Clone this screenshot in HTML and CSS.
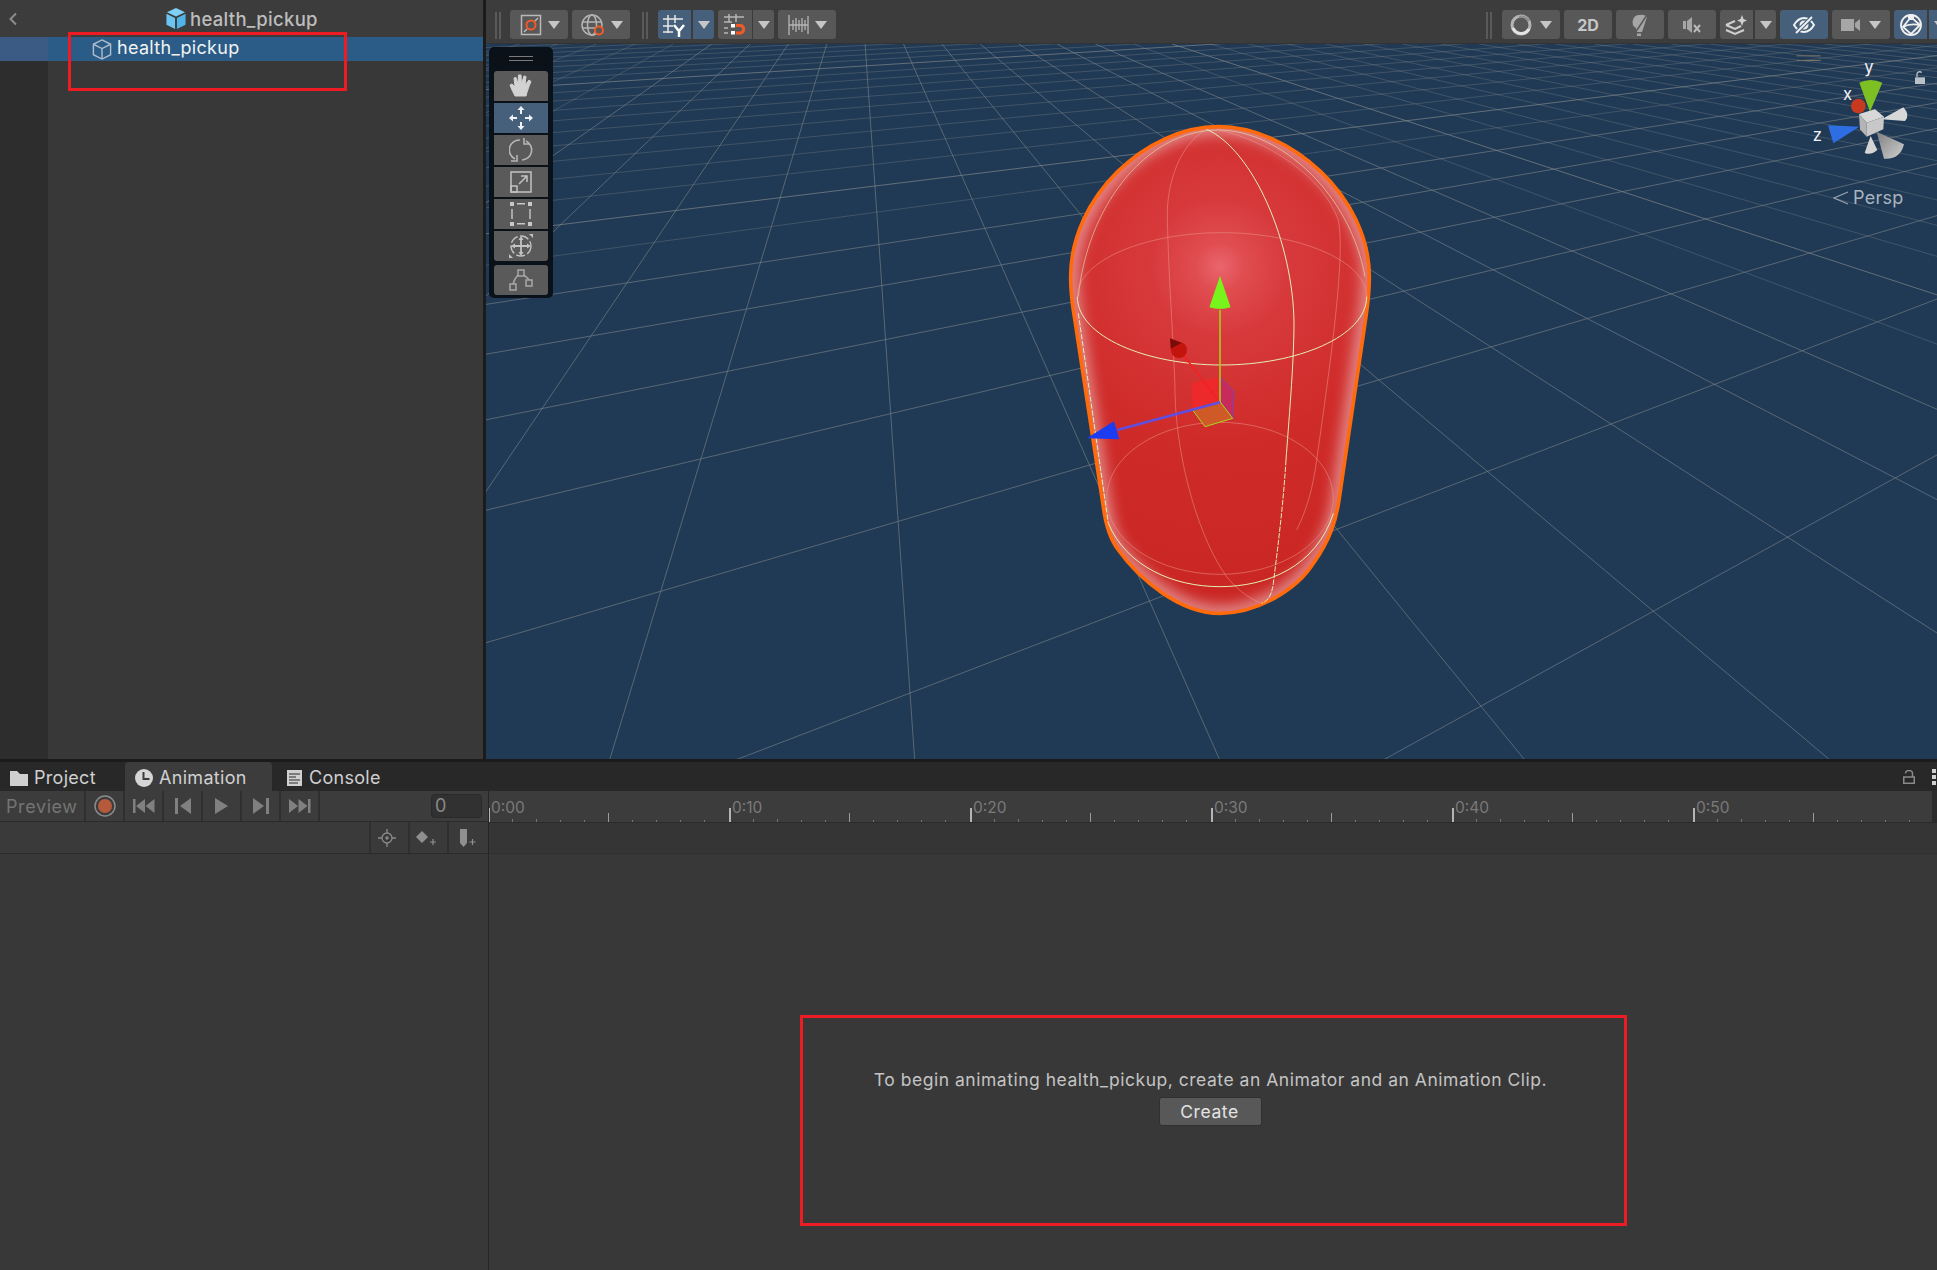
FILE: index.html
```html
<!DOCTYPE html>
<html lang="en">
<head>
<meta charset="utf-8">
<title>health_pickup</title>
<link rel="stylesheet" href="styles.css">
</head>
<body>
<div class="app">
  <div class="top">
    <section class="hierarchy">
      <header class="crumb">
        <svg class="chev" width="10" height="14" viewBox="0 0 10 14"><path d="M8 1.500 2.500 7 8 12.500" fill="none" stroke="#8c8c8c" stroke-width="2"/></svg>
        <span class="crumb-title">
          <svg width="20" height="21" viewBox="0 0 20 22"><path d="M10 0 19.500 4.500 10 9 .5 4.500Z" fill="#7fd0f7"/><path d="M0 6 9 10.500V22L0 17.500Z" fill="#6cc4f0"/><path d="M20 6 11 10.500V22L20 17.500Z" fill="#4fb3e8"/></svg>
          health_pickup
        </span>
      </header>
      <div class="tree">
        <div class="gutter"></div>
        <div class="tree-main">
          <div class="row-sel">
            <svg width="20" height="21" viewBox="0 0 20 22" fill="none" stroke="#aebccb" stroke-width="1.500"><path d="M10 1 19 5.500V16.500L10 21 1 16.500V5.500Z"/><path d="M1 5.500 10 10 19 5.500M10 10V21"/></svg>
            <span>health_pickup</span>
          </div>
        </div>
      </div>
    </section>
    <section class="scene">
      <div class="toolbar">
        <i class="grip"></i>
        <div class="tb w58 tight">
          <svg width="24" height="24" viewBox="0 0 24 24" fill="none"><rect x="2.500" y="2.500" width="19" height="19" stroke="#b9b9b9" stroke-width="1.500"/><path d="M5 19 8 16M16 8 19 5" stroke="#b9b9b9" stroke-width="1.500"/><circle cx="12" cy="12" r="4.500" stroke="#f05a28" stroke-width="2"/></svg>
          <i class="caret"></i>
        </div>
        <div class="tb w58 tight">
          <svg width="26" height="24" viewBox="0 0 26 24" fill="none" stroke="#b5b5b5" stroke-width="1.500"><circle cx="12" cy="12" r="10"/><ellipse cx="12" cy="12" rx="4.500" ry="10"/><path d="M2 9H22M2 15H22"/><circle cx="19" cy="17.500" r="4" fill="#585858" stroke="#f05a28" stroke-width="2"/></svg>
          <i class="caret"></i>
        </div>
        <i class="grip g2"></i>
        <div class="tb on w33">
          <svg width="26" height="24" viewBox="0 0 26 24" fill="none" stroke="#e8e8e8" stroke-width="1.500"><path d="M6 2V20M13 2V10M1 6H21M1 13H11M1 19H11"/><path d="M12 12 17 18 22 12M17 18V24" stroke="#fff" stroke-width="2.500"/></svg>
        </div>
        <div class="tb on w21"><i class="caret"></i></div>
        <div class="tb w34 g4">
          <svg width="26" height="24" viewBox="0 0 26 24" fill="none" stroke="#b5b5b5" stroke-width="1.500"><path d="M7 1V9M14 1V9M2 4H22M2 9H10M2 15H6M2 20H6" /><rect x="9" y="11" width="4" height="3.500" fill="#fff" stroke="none"/><rect x="9" y="18" width="4" height="3.500" fill="#fff" stroke="none"/><path d="M14 12.500H19A4 4 0 0 1 19 20H14" stroke="#f05a28" stroke-width="3"/></svg>
        </div>
        <div class="tb w21 g1"><i class="caret"></i></div>
        <div class="tb w58 tight">
          <svg width="22" height="22" viewBox="0 0 22 22" fill="none" stroke="#b5b5b5" stroke-width="1.300"><path d="M1 1V21M20 2V20M5 6V16M8 4V18M11 6V16M14 4V18M17 6V16M1 11H20"/></svg>
          <i class="caret"></i>
        </div>
        <i class="grip gr"></i>
        <div class="tb w58">
          <svg width="22" height="22" viewBox="0 0 22 22" fill="none"><circle cx="11" cy="11" r="9" stroke="#b4b4b4" stroke-width="3"/><path d="M3 14A9 9 0 0 0 19 15" stroke="#e4e4e4" stroke-width="3"/><path d="M9 3A9 9 0 0 1 19 7" stroke="#8e8e8e" stroke-width="2.500"/></svg>
          <i class="caret"></i>
        </div>
        <div class="tb w48 t2d">2D</div>
        <div class="tb w48">
          <svg width="20" height="24" viewBox="0 0 20 24"><path d="M10 2A7 7 0 0 0 6 15V19H12L17 4A7 7 0 0 0 10 2Z" fill="#a6a6a6"/><path d="M7 20.500H11V23H7Z" fill="#a6a6a6"/><path d="M5 20 17 2" stroke="#585858" stroke-width="1.500"/></svg>
        </div>
        <div class="tb w48">
          <svg width="20" height="18" viewBox="0 0 20 18"><path d="M1 5H4V13H1ZM5 5 10 1V17L5 13Z" fill="#a6a6a6"/><path d="M12 9 18 16M18 9 12 16" stroke="#b8b8b8" stroke-width="2"/></svg>
        </div>
        <div class="tb w33">
          <svg width="26" height="24" viewBox="0 0 26 24" fill="none" stroke="#cfcfcf" stroke-width="2"><path d="M2 12 11 16 17 13"/><path d="M2 17 11 21 20 17"/><path d="M2 12 11 8"/><path d="M18 2 19.500 6 23 7.500 19.500 9 18 13 16.500 9 13 7.500 16.500 6Z" fill="#cfcfcf" stroke="none"/></svg>
        </div>
        <div class="tb w21 g2px"><i class="caret"></i></div>
        <div class="tb on w48 g4">
          <svg width="24" height="20" viewBox="0 0 24 20" fill="none" stroke="#f0f0f0" stroke-width="2"><path d="M2 10C5 5 9 3 12 3S19 5 22 10C19 15 15 17 12 17S5 15 2 10Z"/><circle cx="12" cy="10" r="3.500" fill="#f0f0f0"/><path d="M4 18 20 2" stroke="#46607c" stroke-width="4"/><path d="M4 18 20 2"/></svg>
        </div>
        <div class="tb w58">
          <svg width="20" height="14" viewBox="0 0 20 14"><rect x="0" y="1" width="13" height="12" fill="#a6a6a6"/><path d="M14 5 19 1V13L14 9Z" fill="#a6a6a6"/></svg>
          <i class="caret"></i>
        </div>
        <div class="tb on w33">
          <svg width="24" height="24" viewBox="0 0 24 24" fill="none" stroke="#f0f0f0" stroke-width="1.800"><circle cx="12" cy="12" r="10"/><path d="M12 4 4 14 12 21 21 12ZM4 14C9 11 15 11 21 12"/><circle cx="12" cy="4" r="2.200" fill="#f0f0f0"/></svg>
        </div>
        <div class="tb on w21 g2px"><i class="caret"></i></div>
      </div>
      <div class="viewport">
        <svg class="world" width="1451" height="715" viewBox="486 44 1451 715">
          <defs>
            <radialGradient id="body" gradientUnits="userSpaceOnUse" cx="540" cy="470" r="1050">
              <stop offset="0" stop-color="#e9666d"/>
              <stop offset=".07" stop-color="#e04d51"/>
              <stop offset=".2" stop-color="#d7393b"/>
              <stop offset=".5" stop-color="#cf2b29"/>
              <stop offset="1" stop-color="#c92522"/>
            </radialGradient>
            <filter id="soft" x="-10%" y="-10%" width="120%" height="120%"><feGaussianBlur stdDeviation="20"/></filter>
            <path id="hull" d="M535 50C750 50 988 260 988 500C988 560 982 590 975 640L900 1150C890 1230 870 1290 820 1360C770 1440 650 1510 540 1510C420 1510 300 1410 235 1320C205 1280 195 1230 190 1190L100 600C94 560 92 530 92 500C92 260 320 50 535 50Z"/>
            <clipPath id="hullclip"><use href="#hull"/></clipPath>
            <linearGradient id="bigcone" x1="0" y1="0" x2="1" y2="1"><stop offset="0" stop-color="#7f7f7f"/><stop offset="1" stop-color="#d0d0d0"/></linearGradient>
          </defs>
          <g id="grid"></g>
          <g transform="translate(1040 110) scale(.33333)">
            <use href="#hull" fill="url(#body)"/>
            <g clip-path="url(#hullclip)"><use href="#hull" fill="none" stroke="#eec4c4" stroke-opacity=".68" stroke-width="44" filter="url(#soft)"/></g>
            <use href="#hull" fill="none" stroke="#ff6a0c" stroke-width="11"/>
            <g fill="none" stroke="#ea9a8e" stroke-width="2.500" stroke-opacity=".6">
              <path d="M112 560C112 450 320 368 545 368S980 450 980 560"/>
              <ellipse cx="540" cy="1165" rx="340" ry="228"/>
              <path d="M500 58C420 100 380 220 382 320C385 500 405 760 405 850C410 1060 480 1290 560 1400C600 1450 640 1470 665 1480"/>
              <path d="M535 60C680 90 850 200 895 330C915 430 880 700 830 1050C820 1130 800 1200 770 1260"/>
            </g>
            <g fill="none" stroke="#e1f0b4" stroke-width="3">
              <path d="M112 560C112 680 320 765 545 765S980 680 980 560"/>
              <path d="M205 1240C260 1370 400 1430 540 1430C680 1430 830 1370 880 1210"/>
              <path d="M115 560C140 300 310 60 535 60C720 60 930 250 975 500" stroke-opacity=".55"/>
              <path d="M500 58C640 120 760 400 762 640C762 760 745 950 738 1050"/>
              <path d="M738 1050C730 1180 715 1300 700 1420C695 1460 680 1475 665 1480" stroke-dasharray="16 4"/>
              <path d="M115 610 205 1240" stroke-dasharray="16 5"/>
            </g>
            <path d="M455 820 540 800V875L458 900Z" fill="#f5272b" fill-opacity=".75"/>
            <path d="M540 800 582 845 578 925 540 875Z" fill="#c82a5c" stroke="#5a50d8" stroke-width="2"/>
            <path d="M458 900 540 875 578 925 495 950Z" fill="#cf5a28" stroke="#a8d81c" stroke-width="3"/>
            <path d="M540 877V600" stroke="#a8c81e" stroke-width="5"/>
            <path d="M540 498 508 592Q540 602 572 592Z" fill="#78f41c"/>
            <path d="M535 870 420 722" stroke="#f22222" stroke-width="5"/>
            <circle cx="417" cy="720" r="24" fill="#c4140e"/>
            <path d="M390 685 392 716 425 698Z" fill="#7a0c08"/>
            <path d="M540 877 232 960" stroke="#5f4fe0" stroke-width="8"/>
            <path d="M140 985 222 934 238 988Z" fill="#1c3cf2"/>
          </g>
          <g transform="translate(1480 0) scale(.33333)">
            <rect x="950" y="166" width="72" height="3" fill="#7a7468"/>
            <rect x="950" y="180" width="72" height="3" fill="#7a7468"/>
            <path d="M1305 232h30v20h-30z" fill="#b8c0c8"/>
            <path d="M1311 232v-8a8 8 0 0 1 14 -6" fill="none" stroke="#b8c0c8" stroke-width="4"/>
            <circle cx="1135" cy="318" r="22" fill="#c83a20"/>
            <path d="M1170 335 1138 248Q1172 232 1207 248Z" fill="#7cc023"/>
            <path d="M1138 380 1044 376 1060 430Z" fill="#2e6de2"/>
            <path d="M1205 358 1270 322Q1292 345 1275 363Z" fill="#d8d8d8"/>
            <path d="M1172 408 1154 458Q1170 468 1192 450Z" fill="#d5d5d5"/>
            <path d="M1190 395 1272 433Q1260 480 1212 476Z" fill="url(#bigcone)"/>
            <path d="M1137 342 1185 328 1212 350 1160 368Z" fill="#d8d8d8"/>
            <path d="M1137 342 1160 368V410L1140 388Z" fill="#b4b4b4"/>
            <path d="M1160 368 1212 350 1210 388 1160 410Z" fill="#c8c8c8"/>
            <text class="axis" x="1167" y="220">y</text>
            <text class="axis" x="1103" y="300">x</text>
            <text class="axis" x="1012" y="423">z</text>
          </g>
        </svg>
        <div class="toolbox">
          <div class="handle"></div>
          <div class="tool">
            <svg width="24" height="26" viewBox="0 0 24 26"><path d="M6 23C4 19 2 15 1 12L3 11 6 14 5 5 7 4.500 9 11 9.500 2 12 2 12.500 11 15 3 17 3.500 16 12 20 7 22 8.500C20 13 18 19 17 23Z" fill="#d2d2d2" stroke="#d2d2d2" stroke-linejoin="round"/></svg>
          </div>
          <div class="tool on">
            <svg width="26" height="26" viewBox="0 0 26 26" fill="none" stroke="#eef2f6" stroke-width="2"><path d="M13 3V9M13 17V23M3 13H9M17 13H23"/><path d="M13 1 9.500 5H16.500ZM13 25 9.500 21H16.500ZM1 13 5 9.500V16.500ZM25 13 21 9.500V16.500Z" fill="#eef2f6" stroke="none"/></svg>
          </div>
          <div class="tool">
            <svg width="24" height="26" viewBox="0 0 24 26" fill="none" stroke="#b5b5b5" stroke-width="1.600"><path d="M11 3A10 10 0 0 0 6 22"/><path d="M13 23A10 10 0 0 0 17 4"/><path d="M2 24H8V18M15 1V7H21"/></svg>
          </div>
          <div class="tool">
            <svg width="22" height="22" viewBox="0 0 22 22" fill="none" stroke="#c2c2c2" stroke-width="1.500"><rect x="1" y="1" width="20" height="20"/><rect x="1" y="15" width="6" height="6"/><path d="M9 13 17 5M11 5H17V11"/></svg>
          </div>
          <div class="tool">
            <svg width="22" height="24" viewBox="0 0 22 24" fill="#c8c8c8"><rect x="0" y="0" width="4" height="4"/><rect x="18" y="0" width="4" height="4"/><rect x="0" y="20" width="4" height="4"/><rect x="18" y="20" width="4" height="4"/><path d="M7 1h8v1.400H7zM7 21h8v1.600H7zM1.300 7h1.400v10H1.300zM19.300 7h1.400v10h-1.400z"/></svg>
          </div>
          <div class="tool">
            <svg width="26" height="26" viewBox="0 0 26 26" fill="none" stroke="#c2c2c2" stroke-width="1.400"><circle cx="13" cy="13" r="10" stroke-dasharray="9 2.500"/><path d="M13 5V21M5 13H21" stroke-width="1.800"/><path d="M13 3 10.500 7H15.500ZM13 23 10.500 19H15.500ZM3 13 7 10.500V15.500ZM23 13 19 10.500V15.500Z" fill="#c2c2c2" stroke="none"/><path d="M21 1H25V5ZM1 25V21L5 25Z" fill="#c2c2c2" stroke="none"/></svg>
          </div>
          <div class="tool sep">
            <svg width="24" height="22" viewBox="0 0 24 22" fill="none" stroke="#a8a8a8" stroke-width="1.500"><rect x="1" y="15" width="6" height="6"/><rect x="17" y="11" width="6" height="6"/><rect x="9" y="1" width="6" height="6"/><path d="M4 15C5 11 7 8 9 6M15 6C17 8 19 9 20 11"/></svg>
          </div>
        </div>
        <div class="persp">
          <svg width="16" height="14" viewBox="0 0 16 14" fill="none" stroke="#9aa5b1" stroke-width="1.200"><path d="M15 1 1 7 15 13"/></svg>
          <span>Persp</span>
        </div>
      </div>
    </section>
  </div>
  <div class="bottom">
    <nav class="tabs">
      <div class="tab">
        <svg width="19" height="16" viewBox="0 0 19 16"><path d="M0 1H7L10 4H18V16H0Z" fill="#d0d0d0"/></svg>
        <span>Project</span>
      </div>
      <div class="tab active">
        <svg width="18" height="18" viewBox="0 0 18 18"><circle cx="9" cy="9" r="9" fill="#d6d6d6"/><path d="M8.500 3V10H14.500" fill="none" stroke="#3c3c3c" stroke-width="2"/></svg>
        <span>Animation</span>
      </div>
      <div class="tab last">
        <svg width="15" height="16" viewBox="0 0 15 16"><rect width="15" height="16" fill="#d0d0d0"/><path d="M2 4H13M2 7H9M2 10H13M2 13H11" stroke="#282828" stroke-width="1.200"/></svg>
        <span>Console</span>
      </div>
      <div class="tab-tools">
        <svg width="12" height="14" viewBox="0 0 12 14" fill="none" stroke="#8a8a8a" stroke-width="1.500"><rect x=".75" y="7" width="10.500" height="6.300"/><path d="M2.500 3.500A3.500 3 0 0 1 9.500 3.500V7"/></svg>
        <span class="dots"><i></i><i></i><i></i></span>
      </div>
    </nav>
    <div class="anim">
      <aside class="props">
        <div class="controls">
          <div class="cell preview">Preview</div>
          <div class="cell"><svg width="22" height="22" viewBox="0 0 22 22"><circle cx="11" cy="11" r="10" fill="none" stroke="#8a8a8a" stroke-width="1.500"/><circle cx="11" cy="11" r="7" fill="#b65a3c"/></svg></div>
          <div class="cell"><svg width="22" height="14" viewBox="0 0 22 14" fill="#808080"><path d="M0 0H2.500V14H0ZM12 0V14L3 7ZM21.500 0V14L12.500 7Z"/></svg></div>
          <div class="cell"><svg width="16" height="16" viewBox="0 0 16 16" fill="#808080"><path d="M0 0H3V16H0ZM16 0V16L5 8Z"/></svg></div>
          <div class="cell"><svg width="13" height="16" viewBox="0 0 13 16" fill="#808080"><path d="M0 0 13 8 0 16Z"/></svg></div>
          <div class="cell"><svg width="16" height="16" viewBox="0 0 16 16" fill="#808080"><path d="M16 0H13V16H16ZM0 0V16L11 8Z"/></svg></div>
          <div class="cell"><svg width="22" height="14" viewBox="0 0 22 14" fill="#808080"><path d="M21.500 0H19V14H21.500ZM9.500 0V14L18.500 7ZM0 0V14L9 7Z"/></svg></div>
          <div class="frame">0</div>
        </div>
        <div class="keys">
          <div class="kcell"><svg width="18" height="18" viewBox="0 0 18 18" fill="none" stroke="#8a8a8a" stroke-width="1.300"><circle cx="9" cy="9" r="5"/><circle cx="9" cy="9" r="1" fill="#8a8a8a"/><path d="M9 0V4M9 14V18M0 9H4M14 9H18"/></svg></div>
          <div class="kcell"><svg width="22" height="16" viewBox="0 0 22 16"><path d="M7 1 13 7 7 13 1 7Z" fill="#8f8f8f"/><path d="M18 9V15M15 12H21" stroke="#8f8f8f" stroke-width="1.200"/></svg></div>
          <div class="kcell"><svg width="18" height="20" viewBox="0 0 18 20"><path d="M1 1H8V15L4.500 19 1 15Z" fill="#8f8f8f"/><path d="M13.500 11V17M10.500 14H16.500" stroke="#8f8f8f" stroke-width="1.200"/></svg></div>
        </div>
      </aside>
      <div class="timeline">
        <div class="ruler">
          <svg class="ticks" width="1443" height="31">
            <defs>
              <pattern id="rule" width="241" height="31" patternUnits="userSpaceOnUse" x="-1">
                <rect x="0" y="17" width="2" height="14" fill="#b4b4b4"/>
                <rect x="120" y="22" width="1" height="9" fill="#9a9a9a"/>
                <path d="M24 28h1v3h-1zM48 28h1v3h-1zM72 29h1v2h-1zM96 29h1v2h-1zM144 29h1v2h-1zM168 29h1v2h-1zM192 29h1v2h-1zM216 29h1v2h-1z" fill="#777"/>
              </pattern>
            </defs>
            <rect width="1443" height="31" fill="url(#rule)"/>
            <rect x="-1" y="12" width="1" height="19" fill="#b4b4b4"/>
          </svg>
          <span class="lab">0:00</span><span class="lab">0:10</span><span class="lab">0:20</span><span class="lab">0:30</span><span class="lab">0:40</span><span class="lab">0:50</span>
        </div>
        <div class="dope"></div>
        <div class="message">
          <p>To begin animating health_pickup, create an Animator and an Animation Clip.</p>
          <button class="create">Create</button>
        </div>
      </div>
    </div>
  </div>
  <div class="mark mark-a"></div>
  <div class="mark mark-b"></div>
</div>
<script src="grid.js"></script>
</body>
</html>
```
FILE: styles.css
```css
* { box-sizing: border-box; }
html, body { margin: 0; padding: 0; background: #383838; }
body { font-family: Inter, "Liberation Sans", sans-serif; overflow: hidden; }
.app { position: relative; width: 1937px; height: 1270px; overflow: hidden; display: flex; flex-direction: column; }
svg { display: block; flex-shrink: 0; }

.top { display: flex; height: 759px; flex-shrink: 0; }
.hierarchy { width: 486px; border-right: 3px solid #1b1b1b; background: #383838; display: flex; flex-direction: column; flex-shrink: 0; }
.crumb { height: 37px; background: #3c3c3c; position: relative; display: flex; align-items: center; justify-content: flex-start; padding-left: 166px; }
.chev { position: absolute; left: 8px; top: 12px; }
.crumb-title { display: flex; align-items: center; gap: 4px; font-size: 18.500px; color: #bdbdbd; letter-spacing: .3px; font-weight: 500; }
.tree { flex: 1; display: flex; }
.gutter { width: 48px; background: linear-gradient(#3b5a84 0 24px, #2d2d2d 24px); }
.tree-main { flex: 1; }
.row-sel { height: 24px; background: #2b5c87; display: flex; align-items: center; padding-left: 44px; gap: 5px; color: #f2f2f2; font-size: 18px; letter-spacing: .3px; }
.row-sel span { margin-top: -3px; }

.scene { flex: 1; display: flex; flex-direction: column; min-width: 0; }
.toolbar { height: 44px; background: #3c3c3c; display: flex; align-items: flex-start; padding: 10px 0 0 9px; overflow: hidden; flex-shrink: 0; box-shadow: inset 0 -1px 0 #333; }
.grip { width: 6px; height: 27px; margin-top: 2px; border-left: 2px solid #5a5a5a; border-right: 2px solid #5a5a5a; flex-shrink: 0; }
.grip { margin-right: 9px; }
.grip.g2 { margin-left: 8px; margin-right: 10px; }
.grip.gr { margin-left: 646px; margin-right: 10px; }
.tb { height: 29px; background: #585858; border-radius: 3px; display: flex; align-items: center; justify-content: center; gap: 8px; margin-right: 4px; flex-shrink: 0; }
.tb.tight { gap: 5px; }
.tb.on { background: #46607c; }
.w58 { width: 58px; }
.w48 { width: 48px; }
.w33 { width: 33px; margin-right: 2px; border-radius: 3px 0 0 3px; }
.w21 { width: 21px; border-radius: 0 3px 3px 0; }
.w34 { width: 34px; }
.tb.g4 { border-radius: 3px; }
.tb.w34 { margin-right: 1px; border-radius: 3px 0 0 3px; }
.t2d { font-size: 16px; font-weight: 700; color: #c6c6c6; }
.caret { width: 0; height: 0; border-left: 6.500px solid transparent; border-right: 6.500px solid transparent; border-top: 8px solid #c6c6c6; flex-shrink: 0; }

.viewport { position: relative; height: 715px; background: #203a55; overflow: hidden; }
.world { position: absolute; left: 0; top: 0; }
.grid-line { stroke: #7d8388; stroke-width: 1; stroke-opacity: .62; }
.grid-line.far { stroke-opacity: .36; }
.grid-line.major { stroke: #8d9090; stroke-opacity: .62; }
.axis { font-family: Inter, "Liberation Sans", sans-serif; font-size: 50px; fill: #f2f2f2; text-anchor: middle; }

.toolbox { position: absolute; left: 3px; top: 3px; width: 64px; height: 251px; background: #0a1119; border-radius: 5px; padding: 24px 5px 0; display: flex; flex-direction: column; gap: 2px; }
.handle { position: absolute; left: 20px; top: 9px; width: 24px; height: 5px; border-top: 1px solid #7a7a7a; border-bottom: 1px solid #7a7a7a; }
.tool { height: 30px; background: #5a5a5a; display: flex; align-items: center; justify-content: center; }
.tool.on { background: #46607c; }
.tool:nth-child(2) { border-radius: 3px 3px 0 0; }
.tool:nth-child(7) { border-radius: 0 0 3px 3px; }
.tool.sep { margin-top: 2px; border-radius: 3px; }

.persp { position: absolute; left: 1347px; top: 143px; display: flex; align-items: center; gap: 4px; color: #aab4bf; font-size: 18px; letter-spacing: .3px; }

.bottom { flex: 1; border-top: 3px solid #1b1b1b; display: flex; flex-direction: column; background: #383838; min-height: 0; }
.tabs { height: 29px; background: #282828; display: flex; align-items: stretch; flex-shrink: 0; color: #d0d0d0; font-size: 18px; letter-spacing: .3px; }
.tab { display: flex; align-items: center; gap: 5px; padding: 2px 0 0 10px; width: 125px; }
.tab.active { width: 147px; background: #3c3c3c; border-radius: 4px 4px 0 0; gap: 6px; }
.tab.last { padding-left: 15px; gap: 7px; width: 120px; }
.tab-tools { margin-left: auto; display: flex; align-items: center; gap: 17px; padding-right: 1px; }
.dots { display: flex; flex-direction: column; gap: 2px; }
.dots i { width: 4px; height: 4px; background: #d0d0d0; display: block; }

.anim { flex: 1; display: flex; min-height: 0; }
.props { width: 489px; border-right: 1px solid #262626; flex-shrink: 0; }
.controls { height: 31px; background: #3c3c3c; display: flex; border-bottom: 1px solid #2b2b2b; }
.cell { width: 39px; border-right: 2px solid #2f2f2f; display: flex; align-items: center; justify-content: center; height: 30px; }
.preview { width: 86px; color: #747474; font-size: 18px; letter-spacing: .6px; justify-content: flex-start; padding-left: 6px; }
.frame { margin-left: auto; margin-right: 6px; width: 51px; height: 24px; margin-top: 3px; background: #313131; border: 1px solid #2a2a2a; border-radius: 4px; color: #8a8a8a; font-size: 18px; padding-left: 3px; line-height: 22px; }
.keys { height: 32px; background: #3a3a3a; display: flex; justify-content: flex-end; border-bottom: 1px solid #2b2b2b; padding-right: 2px; }
.kcell { width: 39px; border-left: 2px solid #2f2f2f; display: flex; align-items: center; justify-content: center; height: 31px; }
.kcell:not(:last-child) { padding-right: 5px; }

.timeline { flex: 1; display: flex; flex-direction: column; min-width: 0; }
.ruler { position: relative; height: 32px; background: #3c3c3c; display: flex; border-bottom: 1px solid #2a2a2a; border-right: 5px solid #2b2b2b; }
.ticks { position: absolute; left: 0; top: 0; }
.lab { width: 241px; padding: 9px 0 0 2px; font-size: 15.500px; line-height: 16px; color: #7a7a7a; flex-shrink: 0; position: relative; }
.dope { height: 31px; background: #353535; border-bottom: 1px solid #2f2f2f; }
.message { flex: 1; display: flex; flex-direction: column; align-items: center; padding: 216px 5px 0 0; }
.message p { margin: 0; height: 20px; line-height: 20px; font-size: 17.500px; color: #c4c4c4; letter-spacing: .52px; white-space: nowrap; }
.create { margin-top: 7px; width: 103px; height: 29px; background: #585858; border: 1px solid #303030; border-radius: 3px; color: #e4e4e4; font: 17.500px Inter, "Liberation Sans", sans-serif; letter-spacing: .6px; padding: 0 2px 0 0; }

.mark { position: absolute; border: 3px solid #ed1c24; pointer-events: none; }
.mark-a { left: 68px; top: 32px; width: 279px; height: 59px; }
.mark-b { left: 800px; top: 1015px; width: 827px; height: 211px; }
```
FILE: grid.js
```js
// Perspective floor grid: two families of evenly spaced lines, each through its vanishing point.
(function () {
  var NS = 'http://www.w3.org/2000/svg';
  var g = document.getElementById('grid');
  var vpA = { x: 858, y: -59 }, vpB = { x: 2870, y: -59 };
  var base = 759, span = base - vpA.y, top = 44, left = 486, right = 1937;

  function add(x1, y1, x2, y2, cls) {
    var l = document.createElementNS(NS, 'line');
    l.setAttribute('x1', x1.toFixed(1));
    l.setAttribute('y1', y1.toFixed(1));
    l.setAttribute('x2', x2.toFixed(1));
    l.setAttribute('y2', y2.toFixed(1));
    l.setAttribute('class', cls);
    g.appendChild(l);
  }

  for (var a = -12; a <= 34; a++) {
    var xa = 914.6 + 304.7 * a;
    var t = (top - vpA.y) / span;
    add(vpA.x + (xa - vpA.x) * t, top, xa, base, a === 8 ? 'grid-line major' : (a > 6 || a < -4 ? 'grid-line far' : 'grid-line'));
  }
  for (var b = -2; b <= 34; b++) {
    var xb = 91 - 647 * b;
    var s = span / (vpB.x - xb);
    add(left, vpB.y + (vpB.x - left) * s, right, vpB.y + (vpB.x - right) * s, b === 6 || b === 16 ? 'grid-line major' : (b > 4 ? 'grid-line far' : 'grid-line'));
  }
})();
```
